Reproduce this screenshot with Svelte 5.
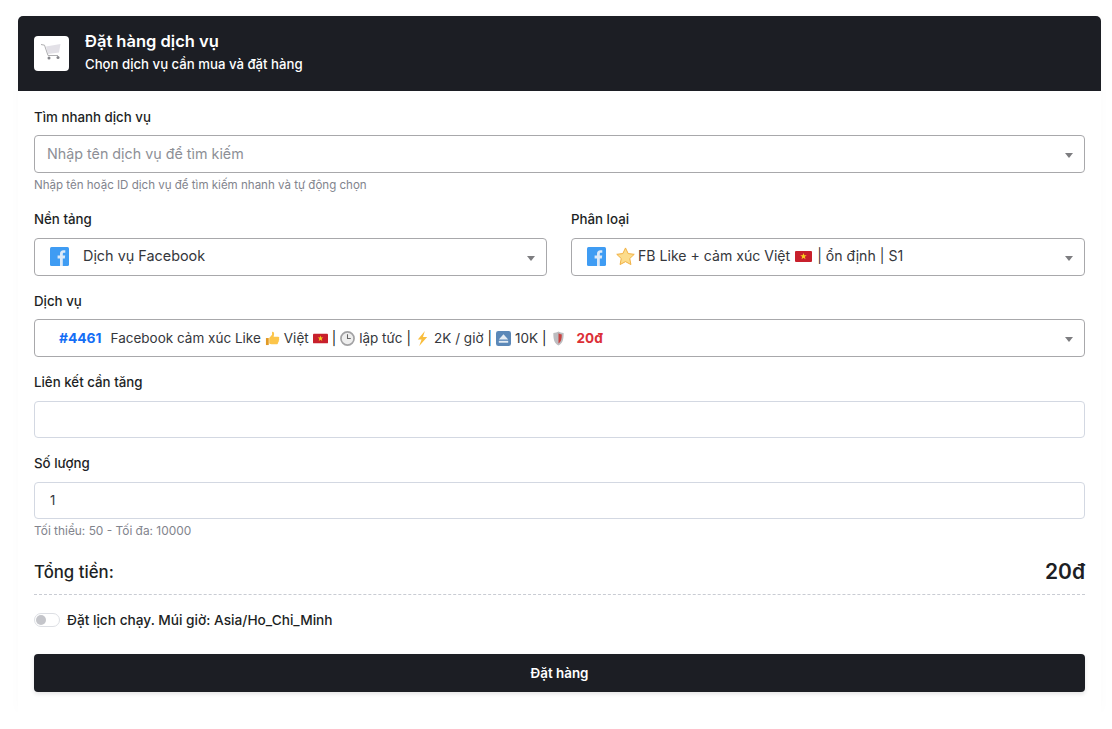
<script>
	let scheduled = $state(false)
	let search = $state('')
	let link = $state('')
	let quantity = $state(1)
</script>

{#snippet fb()}
	<svg class="fb" viewBox="0 0 19 19" aria-hidden="true">
		<rect width="19" height="19" rx="1.5" fill="#3f9cf3" />
		<path d="M10 19v-7.6H7.6V8.6H10V6.7C10 4.400 11.300 3.200 13.400 3.200c.9 0 1.600.1 1.900.1v2.500h-1.200c-1 0-1.300.5-1.300 1.200v1.600h2.400l-.4 2.800h-2V19z" fill="#dce9f8" />
	</svg>
{/snippet}

{#snippet flag()}
	<svg class="emoji flag" viewBox="0 0 17 13" aria-hidden="true">
		<rect y="1" width="17" height="11" rx="1" fill="#c8202c" />
		<path d="M8.500 3l.8 2.300h2.400l-1.900 1.500.7 2.400-2-1.400-2 1.400.7-2.400-1.900-1.500h2.400z" fill="#f7d21e" />
	</svg>
{/snippet}

<main class="card">
	<header class="card-head">
		<div class="head-icon">
			<svg viewBox="0 0 24 24" width="24" height="24" aria-hidden="true">
				<path d="M6 4.500 20.500 2 19 10.500 8 12z" fill="#e3e1e7" />
				<path d="M1 2.500 4.500 3.200 8 13.500H18" fill="none" stroke="#aeaeb0" stroke-width="1" />
				<circle cx="9" cy="16" r="1.500" fill="#85858a" />
				<circle cx="18" cy="15.500" r="1.500" fill="#85858a" />
			</svg>
		</div>
		<div class="head-text">
			<h1>Đặt hàng dịch vụ</h1>
			<p>Chọn dịch vụ cần mua và đặt hàng</p>
		</div>
	</header>

	<form class="card-body" onsubmit={(e) => e.preventDefault()}>
		<div class="field with-help">
			<label for="search">Tìm nhanh dịch vụ</label>
			<div class="select">
				<input id="search" bind:value={search} placeholder="Nhập tên dịch vụ để tìm kiếm" />
			</div>
			<small>Nhập tên hoặc ID dịch vụ để tìm kiếm nhanh và tự động chọn</small>
		</div>

		<div class="row">
			<div class="field">
				<span class="label">Nền tảng</span>
				<div class="select">
					<div class="value platform">{@render fb()}<span>Dịch vụ Facebook</span></div>
				</div>
			</div>
			<div class="field">
				<span class="label">Phân loại</span>
				<div class="select">
					<div class="value category">
						{@render fb()}
						<svg class="emoji star" viewBox="0 0 20 20" aria-hidden="true">
							<path d="M10 1l2.800 5.900 6.400.8-4.700 4.400 1.200 6.400L10 15.400l-5.700 3.100 1.200-6.400L.8 7.700l6.400-.8z" fill="#fcdc8c" stroke="#f0ae3e" stroke-width="1" />
						</svg>
						<span>FB Like + cảm xúc Việt</span>
						{@render flag()}
						<span>| ổn định | S1</span>
					</div>
				</div>
			</div>
		</div>

		<div class="field">
			<span class="label">Dịch vụ</span>
			<div class="select">
				<div class="value service">
					<b class="id">#4461</b>
					<span>Facebook cảm xúc Like</span>
					<svg class="emoji" viewBox="0 0 16 16" aria-hidden="true">
						<path d="M1 7.500h3V15H1z" fill="#e09a26" />
						<path d="M4.500 7.500 7.500 4V1c1.500-.5 2.500.8 2.200 2.500L9.200 6H14c1.400 0 1.600 1.600.8 2.200.7.8.4 1.800-.3 2.200.4.900 0 1.700-.7 2 .1 1-.5 1.800-1.500 1.800H7c-1 0-1.700-.5-2.500-.8z" fill="#fcc54a" />
					</svg>
					<span>Việt</span>
					{@render flag()}
					<span class="sep">|</span>
					<svg class="emoji" viewBox="0 0 16 16" aria-hidden="true">
						<circle cx="8" cy="8" r="7" fill="#eeeeee" stroke="#a2a2a4" stroke-width="1.800" />
						<path d="M8 3.500V8h3.500" fill="none" stroke="#666" stroke-width="1.100" />
					</svg>
					<span>lập tức</span>
					<span class="sep">|</span>
					<svg class="emoji" viewBox="0 0 16 16" aria-hidden="true">
						<path d="M10.500 0 3 9h4l-2.500 7L13 6.500H8.500z" fill="#f9bd3c" />
					</svg>
					<span>2K / giờ</span>
					<span class="sep">|</span>
					<svg class="emoji" viewBox="0 0 16 16" aria-hidden="true">
						<rect width="16" height="16" rx="2.500" fill="#5b88b8" />
						<path d="M8 3.500 13 9H3z" fill="#e4ecf4" />
						<rect x="3" y="10.500" width="10" height="2" fill="#e4ecf4" />
					</svg>
					<span>10K</span>
					<span class="sep">|</span>
					<svg class="emoji shield" viewBox="0 0 16 16" aria-hidden="true">
						<path d="M8 .5c1.500 1 3.300 1.500 5.500 1.500 0 6-.5 10.500-5.500 13.500C3 12.500 2.500 8 2.500 2 4.700 2 6.500 1.500 8 .5z" fill="#bdbdc0" />
						<path d="M8 2.500c1 .6 2 1 3.500 1.100 0 4.400-.6 7.700-3.500 9.800z" fill="#c9413f" />
					</svg>
					<b class="price">20đ</b>
				</div>
			</div>
		</div>

		<div class="field">
			<label for="link">Liên kết cần tăng</label>
			<input id="link" class="plain" bind:value={link} />
		</div>

		<div class="field with-help">
			<label for="quantity">Số lượng</label>
			<input id="quantity" class="plain" bind:value={quantity} />
			<small class="limits">Tối thiểu: 50 - Tối đa: 10000</small>
		</div>

		<div class="total">
			<span>Tổng tiền:</span>
			<strong>20đ</strong>
		</div>

		<label class="schedule">
			<input type="checkbox" bind:checked={scheduled} />
			<span class="switch"></span>
			<span>Đặt lịch chạy. Múi giờ: Asia/Ho_Chi_Minh</span>
		</label>

		<button type="submit" class="submit">Đặt hàng</button>
	</form>
</main>

<style>
	:global(body) {
		background: #fff;
		font-family: Inter, "Noto Sans", sans-serif;
		color: #1d1f25;
	}

	.card {
		margin: 16px 11px 0 18px;
		box-shadow: 0 0 12px rgba(30, 30, 40, 0.02);
	}

	.card-head {
		display: flex;
		align-items: center;
		gap: 16px;
		height: 75px;
		padding: 0 16px;
		box-sizing: border-box;
		background: #1c1e24;
		color: #fff;
		border-radius: 5px 5px 0 0;
	}

	.head-icon {
		display: flex;
		align-items: center;
		justify-content: center;
		width: 35px;
		height: 35px;
		background: #fff;
		border-radius: 4px;
	}

	.head-text {
		padding-bottom: 4px;
	}

	h1 {
		margin: 0 0 4px;
		font-size: 16.500px;
		line-height: 20px;
		font-weight: 600;
	}

	.card-head p {
		margin: 0;
		font-size: 13.200px;
		line-height: 18px;
		font-weight: 500;
	}

	.card-body {
		padding: 17px 16px 20px;
	}

	.field {
		margin-bottom: 16px;
	}

	.field.with-help {
		margin-bottom: 18px;
	}

	label,
	.label {
		display: block;
		margin-bottom: 9px;
		font-size: 13.300px;
		line-height: 18.400px;
		font-weight: 500;
	}

	.row {
		display: grid;
		grid-template-columns: 513px 1fr;
		gap: 24px;
	}

	.select {
		position: relative;
		display: flex;
		align-items: center;
		height: 38px;
		box-sizing: border-box;
		border: 1px solid #a8a8ab;
		border-radius: 4px;
	}

	.select::after {
		content: '';
		position: absolute;
		right: 11px;
		top: 17px;
		border: 4px solid transparent;
		border-top: 5px solid #7d7d80;
		border-bottom: 0;
	}

	.select input {
		flex: 1;
		min-width: 0;
		border: 0;
		outline: 0;
		padding: 0 12px 2px;
		font: inherit;
		font-size: 14.300px;
		background: transparent;
	}

	.select input::placeholder {
		color: #8d8f96;
	}

	small {
		display: block;
		margin-top: 5px;
		font-size: 11.550px;
		line-height: 14px;
		color: #82848d;
	}

	small.limits {
		font-size: 11.900px;
	}

	.value {
		display: flex;
		align-items: center;
		font-size: 14.400px;
		color: #35373c;
		white-space: nowrap;
	}

	.platform {
		padding-left: 15px;
		gap: 14px;
	}

	.platform span,
	.category span {
		margin-top: -2px;
	}

	.category {
		padding-left: 15px;
		gap: 3px;
		font-size: 14.100px;
	}

	.category .star {
		width: 19px;
		height: 19px;
		margin-left: 7px;
	}

	.category .flag {
		margin-left: 2px;
		width: 17px;
	}

	.category span:last-child {
		margin-left: 2px;
	}

	.fb {
		width: 19px;
		height: 19px;
		flex: none;
	}

	.service {
		padding-left: 24px;
		font-size: 13.500px;
		gap: 4px;
	}

	.id {
		margin-right: 5px;
		color: #146ef5;
		font-weight: 700;
		font-size: 13.800px;
	}

	.price {
		margin-left: 7px;
		color: #dc2f37;
		font-weight: 700;
	}

	.emoji {
		width: 15px;
		height: 15px;
		flex: none;
	}

	.flag {
		width: 15px;
		height: 13px;
	}

	.shield {
		height: 17px;
	}

	.sep {
		color: #222;
	}

	.plain {
		display: block;
		width: 100%;
		height: 37.600px;
		box-sizing: border-box;
		padding: 0 15px;
		border: 1px solid #d3d8e2;
		border-radius: 4px;
		outline: 0;
		font: inherit;
		font-size: 13px;
		color: #35373c;
	}

	.total {
		display: flex;
		justify-content: space-between;
		align-items: center;
		padding-top: 3px;
		padding-bottom: 9px;
		margin-bottom: 16px;
		border-bottom: 1px dashed #c9ccd3;
		font-size: 16.800px;
		line-height: 26px;
		font-weight: 500;
	}

	.total strong {
		font-size: 21px;
		font-weight: 600;
	}

	.schedule {
		display: flex;
		align-items: center;
		gap: 7px;
		margin-bottom: 24px;
		font-size: 13.700px;
		cursor: pointer;
	}

	.schedule input {
		display: none;
	}

	.switch {
		position: relative;
		width: 26px;
		height: 14px;
		box-sizing: border-box;
		border: 1px solid #dddfe4;
		border-radius: 7px;
	}

	.switch::before {
		content: '';
		position: absolute;
		left: 1px;
		top: 1px;
		width: 10px;
		height: 10px;
		border-radius: 50%;
		background: #c4c5ca;
	}

	.submit {
		display: block;
		width: 100%;
		height: 38px;
		border: 0;
		border-radius: 4px;
		background: #1c1e24;
		color: #fff;
		font: inherit;
		font-size: 13.400px;
		font-weight: 600;
		box-shadow: 0 2px 4px rgba(30, 30, 40, 0.12);
		cursor: pointer;
	}
</style>
